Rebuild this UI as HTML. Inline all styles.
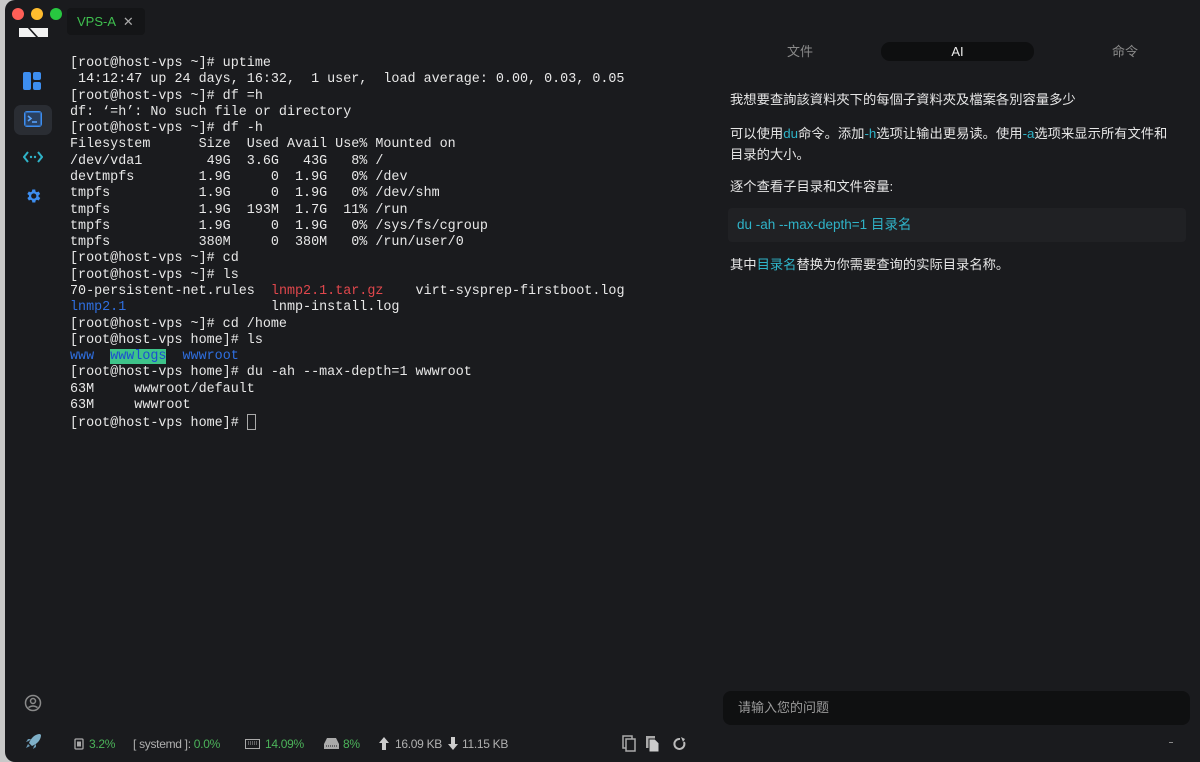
<!DOCTYPE html>
<html><head><meta charset="utf-8"><style>
*{margin:0;padding:0;box-sizing:border-box}
body{width:1200px;height:762px;overflow:hidden;background:#c8c8c8;font-family:"Liberation Sans","Noto Sans CJK SC",sans-serif;position:relative}
#win{position:absolute;left:5px;top:0;width:1195px;height:762px;background:#1a1b1e;border-radius:10px 0 0 10px;overflow:hidden}
.dot{position:absolute;top:8px;width:12px;height:12px;border-radius:50%}
#tab{position:absolute;left:62px;top:8px;width:78px;height:27px;background:#141517;border-radius:4px;color:#3fbf4f;font-size:13px;line-height:27px;padding-left:10px}
#tab span{color:#aaa;margin-left:4px}
#term{position:absolute;left:65px;top:56px;font-family:"Liberation Mono",monospace;font-size:13.4px;line-height:16.28px;color:#e8e8e8;white-space:pre}
.r{color:#e0474c}.b{color:#2f6fe0}.hl{background:#3ec48a;color:#1c4fd0}
#ai{position:absolute;left:713px;top:0;width:482px;height:762px}
.tabs{position:absolute;top:42px;left:0;width:470px;height:19px;font-size:13px;color:#8a8a8a}
.tabs div{position:absolute;top:0;line-height:19px;text-align:center}
.p{position:absolute;left:12px;font-size:13.3px;color:#e6e6e6;line-height:21px}
.c{color:#2fb3c8}
#code{position:absolute;left:10px;top:208px;width:458px;height:34px;background:#202124;border-radius:4px;color:#2fb3c8;font-size:13.5px;line-height:34px;padding-left:9px}
#inp{position:absolute;left:5px;top:691px;width:467px;height:34px;background:#0f1011;border-radius:8px;color:#9a9a9a;font-size:13px;line-height:34px;padding-left:15px}
.s{position:absolute;top:737px;font-size:12px;color:#b0b0b0;white-space:nowrap;letter-spacing:-0.3px}
.g{color:#4cb35a}
</style></head><body>
<div id="win">
<div class="dot" style="left:7px;background:#fe5f57"></div>
<div class="dot" style="left:26px;background:#febc2e"></div>
<div class="dot" style="left:45px;background:#28c840"></div>
<div id="tab">VPS-A <span>✕</span></div>
<svg style="position:absolute;left:14px;top:28px" width="30" height="10"><rect x="0" y="0" width="29" height="9" fill="#f2f2f2"/><path d="M9 -1L19 10" stroke="#1a1b1e" stroke-width="1.6"/></svg>
<svg style="position:absolute;left:18px;top:72px" width="18" height="18"><rect x="0" y="0" width="8" height="18" rx="2" fill="#3d8ef0"/><rect x="10" y="0" width="8" height="8" rx="2" fill="#3d8ef0"/><rect x="10" y="10" width="8" height="8" rx="2" fill="#3d8ef0"/></svg>
<div style="position:absolute;left:9px;top:105px;width:38px;height:30px;background:#2a2d33;border-radius:7px"></div>
<svg style="position:absolute;left:19px;top:111px" width="18" height="16"><rect x="1" y="1" width="16" height="14" rx="2" fill="none" stroke="#3d8ef0" stroke-width="2"/><rect x="1" y="1" width="16" height="14" fill="#2c4f80" opacity=".6"/><path d="M4 5l3 2.5-3 2.5M8 11h5" stroke="#5aa5ff" stroke-width="1.6" fill="none"/></svg>
<svg style="position:absolute;left:18px;top:150px" width="20" height="14"><path d="M5 2L1 7l4 5M15 2l4 5-4 5" stroke="#2fb3c8" stroke-width="2" fill="none"/><circle cx="8" cy="7" r="1.2" fill="#2fb3c8"/><circle cx="12" cy="7" r="1.2" fill="#2fb3c8"/></svg>
<svg style="position:absolute;left:19px;top:187px" width="18" height="18" viewBox="0 0 24 24"><path fill="#3d8ef0" d="M19.4 13a7.5 7.5 0 000-2l2.1-1.6-2-3.4-2.5 1a7 7 0 00-1.700-1L15 3.3h-4l-.4 2.7a7 7 0 00-1.7 1l-2.5-1-2 3.4L6.6 11a7.5 7.5 0 000 2l-2.1 1.6 2 3.4 2.5-1a7 7 0 001.7 1l.4 2.7h4l.4-2.7a7 7 0 001.7-1l2.5 1 2-3.4zM13 15.5a3.5 3.5 0 110-7 3.5 3.5 0 010 7z"/></svg>
<svg style="position:absolute;left:19px;top:694px" width="18" height="18"><circle cx="9" cy="9" r="7.5" fill="none" stroke="#8a8a8a" stroke-width="1.5"/><circle cx="9" cy="7" r="2.5" fill="none" stroke="#8a8a8a" stroke-width="1.5"/><path d="M4.5 13.5q4.5-3 9 0" stroke="#8a8a8a" stroke-width="1.5" fill="none"/></svg>
<svg style="position:absolute;left:19px;top:732px" width="18" height="18"><path d="M16 2c-5 0-9 4-11 9l3 3c5-2 9-6 9-11z" fill="#7fb0c8"/><path d="M4 12l-2 4 4-2zM5 9l-3 1 2-3h3zM10 14l-1 3 3-2v-3z" fill="#6a9ab5"/></svg>
<div id="term">[root@host-vps ~]# uptime
 14:12:47 up 24 days, 16:32,  1 user,  load average: 0.00, 0.03, 0.05
[root@host-vps ~]# df =h
df: ‘=h’: No such file or directory
[root@host-vps ~]# df -h
Filesystem      Size  Used Avail Use% Mounted on
/dev/vda1        49G  3.6G   43G   8% /
devtmpfs        1.9G     0  1.9G   0% /dev
tmpfs           1.9G     0  1.9G   0% /dev/shm
tmpfs           1.9G  193M  1.7G  11% /run
tmpfs           1.9G     0  1.9G   0% /sys/fs/cgroup
tmpfs           380M     0  380M   0% /run/user/0
[root@host-vps ~]# cd
[root@host-vps ~]# ls
70-persistent-net.rules  <span class="r">lnmp2.1.tar.gz</span>    virt-sysprep-firstboot.log
<span class="b">lnmp2.1</span>                  lnmp-install.log
[root@host-vps ~]# cd /home
[root@host-vps home]# ls
<span class="b">www</span>  <span class="hl">wwwlogs</span>  <span class="b">wwwroot</span>
[root@host-vps home]# du -ah --max-depth=1 wwwroot
63M     wwwroot/default
63M     wwwroot
[root@host-vps home]# <span style="display:inline-block;width:9px;height:16px;border:1px solid #aaa;vertical-align:-4px"></span></div>
<svg style="position:absolute;left:69px;top:738px" width="10" height="12"><rect x="1" y="1" width="8" height="10" rx="1" fill="none" stroke="#aaa" stroke-width="1.3"/><rect x="3" y="3.5" width="4" height="5" fill="#aaa"/></svg>
<div class="s g" style="left:84px">3.2%</div>
<div class="s" style="left:128px">[ systemd ]: <span class="g">0.0%</span></div>
<svg style="position:absolute;left:240px;top:739px" width="15" height="10"><rect x="0.5" y="0.5" width="14" height="9" fill="none" stroke="#aaa"/><path d="M3 3h9M3 5h9" stroke="#aaa" stroke-dasharray="1 1"/></svg>
<div class="s g" style="left:260px">14.09%</div>
<svg style="position:absolute;left:319px;top:738px" width="15" height="11"><path d="M3 0h9l3 6v5H0V6z" fill="#aaa"/><path d="M2 8h11" stroke="#1a1b1e" stroke-dasharray="1 1"/></svg>
<div class="s g" style="left:338px">8%</div>
<svg style="position:absolute;left:374px;top:737px" width="10" height="13"><path d="M5 0l5 6H7v7H3V6H0z" fill="#ccc"/></svg>
<div class="s" style="left:390px">16.09 KB</div>
<svg style="position:absolute;left:443px;top:737px" width="10" height="13"><path d="M5 13l5-6H7V0H3v7H0z" fill="#ccc"/></svg>
<div class="s" style="left:457px">11.15 KB</div>
<svg style="position:absolute;left:617px;top:735px" width="66" height="17"><rect x="1" y="1" width="9" height="12" fill="none" stroke="#aaa" stroke-width="1.5"/><rect x="4" y="4" width="9" height="12" fill="#1a1b1e" stroke="#aaa" stroke-width="1.5"/><rect x="24" y="1" width="9" height="12" fill="#aaa"/><path d="M27 4h6l4 4v9h-10z" fill="#ccc" stroke="#1a1b1e"/><path d="M58 4a5 5 0 104 3" stroke="#bbb" stroke-width="2" fill="none"/><path d="M59 2l4 2-2 3z" fill="#bbb"/></svg>
<div id="ai">
<div class="tabs"><div style="left:45px;width:74px">文件</div><div style="left:163px;width:153px;background:#0e0f10;border-radius:9px;color:#eee">AI</div><div style="left:370px;width:74px">命令</div></div>
<div class="p" style="top:89px">我想要查詢該資料夾下的每個子資料夾及檔案各別容量多少</div>
<div class="p" style="top:123px">可以使用<span class="c">du</span>命令。添加<span class="c">-h</span>选项让输出更易读。使用<span class="c">-a</span>选项来显示所有文件和<br>目录的大小。</div>
<div class="p" style="top:176px">逐个查看子目录和文件容量:</div>
<div id="code">du -ah --max-depth=1 目录名</div>
<div class="p" style="top:254px">其中<span class="c">目录名</span>替换为你需要查询的实际目录名称。</div>
<div id="inp">请输入您的问题</div>
<div style="position:absolute;left:451px;top:742px;width:4px;height:1px;background:#888"></div>
</div>
</div>
</body></html>
